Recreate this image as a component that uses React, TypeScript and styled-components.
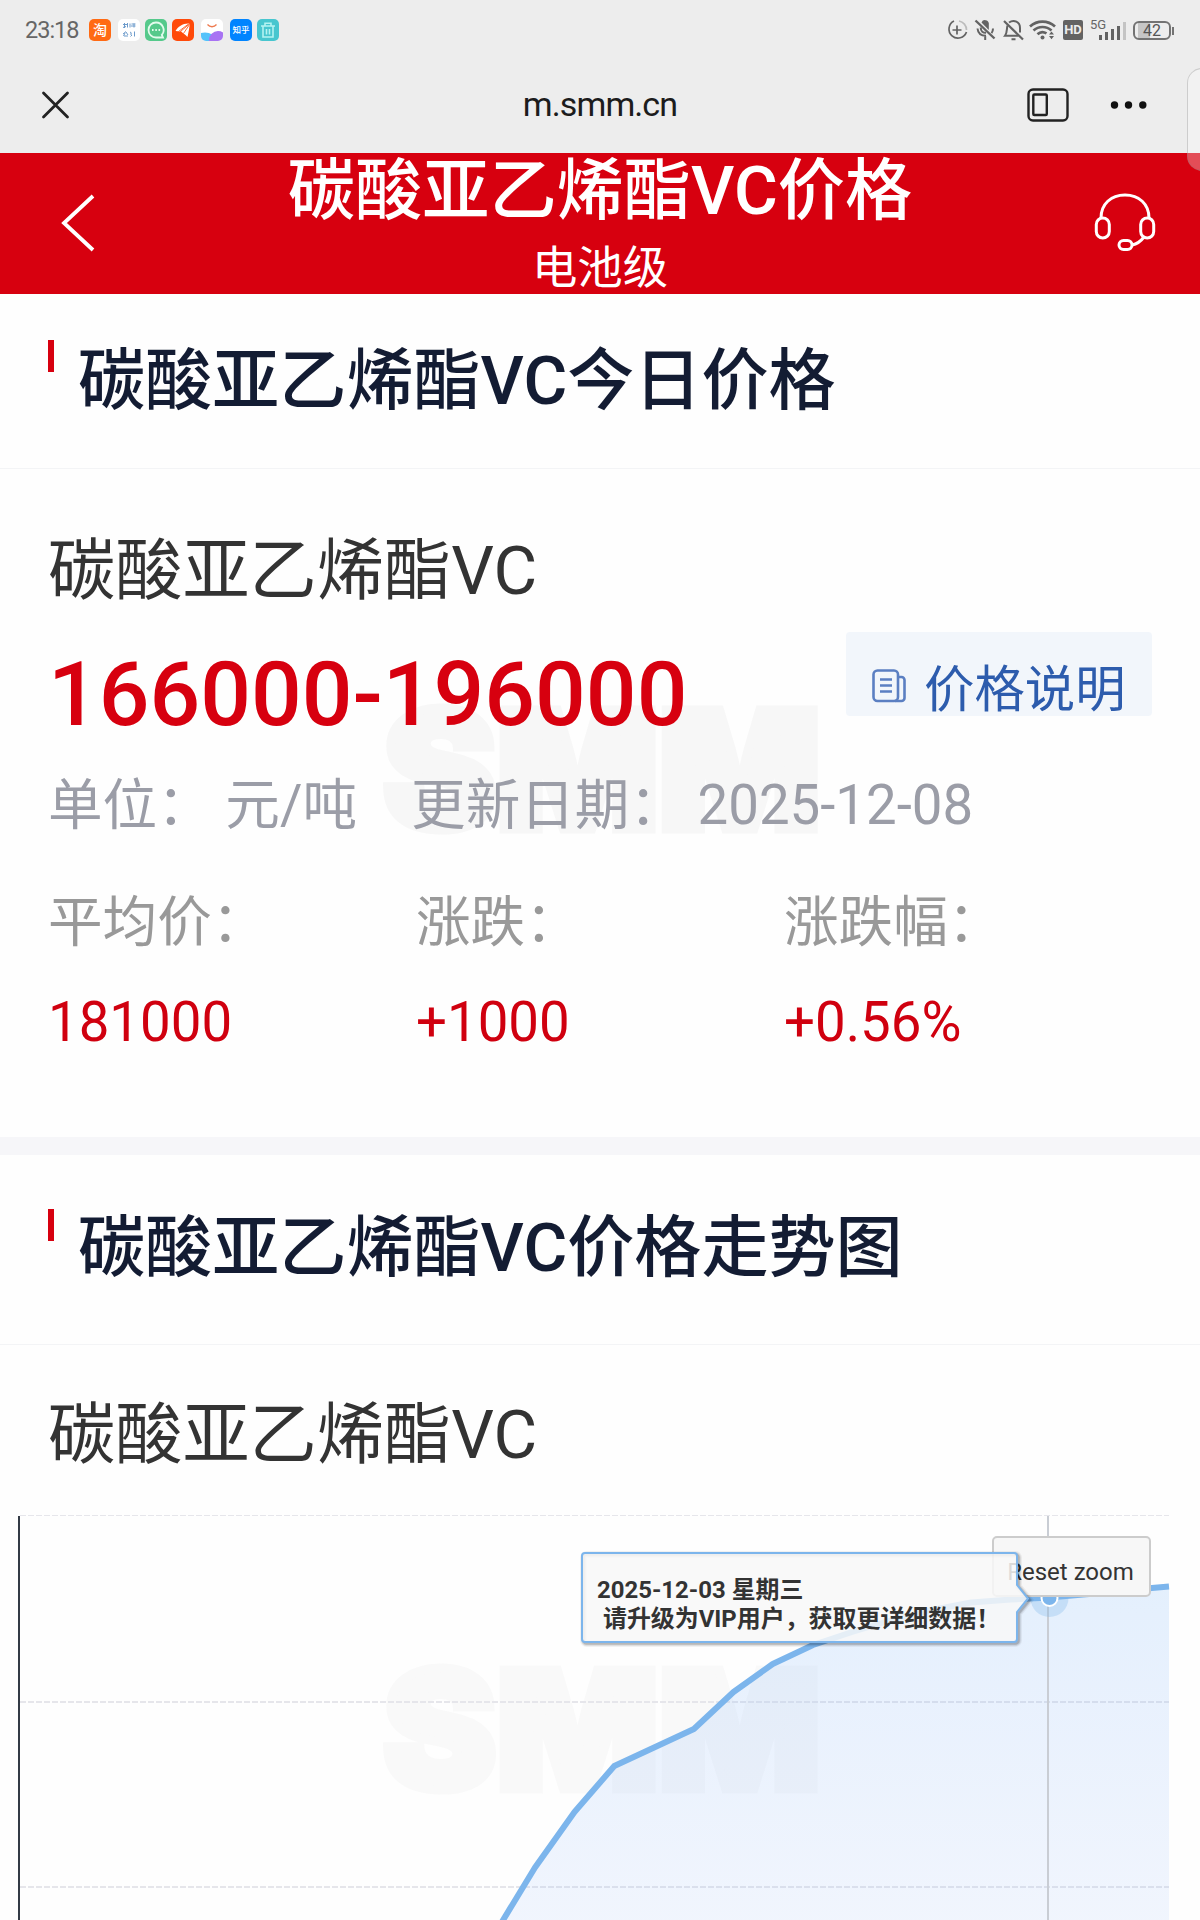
import React from 'react';
import styled, { createGlobalStyle } from 'styled-components';

const RED = '#d7000f';
const FONT = 'Roboto, "Noto Sans CJK SC", sans-serif';

const GlobalStyle = createGlobalStyle`
  * { box-sizing: border-box; }
  body { margin: 0; background: #fefefe; font-family: ${FONT}; }
`;

const Screen = styled.div`
  position: relative;
  width: 1200px;
  height: 1920px;
  overflow: hidden;
  display: flex;
  flex-direction: column;
  background: #fefefe;
`;

/* ---------- system status bar ---------- */

const StatusBar = styled.div`
  height: 57px;
  flex: none;
  display: flex;
  align-items: flex-start;
  justify-content: space-between;
  padding: 18px 29px 0 25px;
  background: #ededed;
  color: #666;
`;

const StatusGroup = styled.div`
  display: flex;
  align-items: center;
  height: 24px;
`;

const Clock = styled.span`
  width: 64px;
  font-size: 23.5px;
  line-height: 24px;
  letter-spacing: -1px;
  white-space: nowrap;
`;

const AppIcon = styled.span<{ $bg: string; $gap: number; $color?: string; $size?: number }>`
  width: 22px;
  height: 22px;
  margin-right: ${(p) => p.$gap}px;
  border-radius: 5px;
  background: ${(p) => p.$bg};
  color: ${(p) => p.$color ?? '#fff'};
  display: flex;
  align-items: center;
  justify-content: center;
  overflow: hidden;
  font-size: ${(p) => p.$size ?? 14}px;
  line-height: 16px;
  font-weight: 500;
  text-align: center;
  white-space: nowrap;
`;

const HdBadge = styled.span`
  width: 20px;
  height: 20px;
  margin-left: 6px;
  border-radius: 2px;
  background: #636363;
  color: #ededed;
  font-size: 13px;
  font-weight: 700;
  line-height: 20px;
  text-align: center;
`;

const Network = styled.span`
  display: flex;
  align-items: flex-end;
  margin-left: 7px;
  height: 20px;
`;

const NetworkLabel = styled.span`
  width: 9px;
  align-self: flex-start;
  font-size: 13px;
  line-height: 9px;
  white-space: nowrap;
`;

const Bar = styled.i<{ $h: number; $dim?: boolean }>`
  width: 3px;
  height: ${(p) => p.$h}px;
  margin-right: 3px;
  background: ${(p) => (p.$dim ? '#c4c4c4' : '#636363')};
`;

const Battery = styled.span`
  position: relative;
  width: 38px;
  height: 19px;
  margin-left: 4px;
  border: 2px solid #737373;
  border-radius: 6px;
  background: linear-gradient(90deg, #ededed 3px, #c6c6c6 3px, #c6c6c6 15px, #ededed 15px);
  font-size: 16px;
  line-height: 16px;
  text-align: center;
  color: #555;
  &::after {
    content: '';
    position: absolute;
    right: -5px;
    top: 4px;
    width: 2px;
    height: 8px;
    background: #737373;
  }
`;

/* ---------- browser bar ---------- */

const BrowserBar = styled.div`
  height: 96px;
  flex: none;
  display: grid;
  grid-template-columns: 1fr auto 1fr;
  align-items: center;
  padding: 0 40px;
  background: #ededed;
`;

const Address = styled.div`
  margin-top: -2px;
  font-size: 34px;
  line-height: 40px;
  letter-spacing: -0.9px;
  color: #1c1c1c;
`;

const Actions = styled.div`
  display: flex;
  align-items: center;
  justify-content: flex-end;
  gap: 41px;
  padding-right: 13px;
`;

const EdgeHandle = styled.div`
  position: absolute;
  left: 1187px;
  top: 68px;
  width: 30px;
  height: 103px;
  border: 1px solid rgba(120, 120, 120, 0.3);
  border-radius: 16px;
  background: rgba(255, 255, 255, 0.3);
`;

/* ---------- page header ---------- */

const PageHeader = styled.header`
  height: 141px;
  flex: none;
  display: grid;
  grid-template-columns: 160px 1fr 160px;
  background: ${RED};
  color: #fff;
`;

const HeaderSide = styled.div<{ $right?: boolean }>`
  display: flex;
  align-items: center;
  justify-content: ${(p) => (p.$right ? 'flex-end' : 'flex-start')};
  padding: ${(p) => (p.$right ? '0 44px 3px 0' : '0 0 1px 59px')};
`;

const HeaderTitles = styled.div`
  text-align: center;
  white-space: nowrap;
`;

const HeaderTitle = styled.h1`
  margin: 0;
  font-size: 67.2px;
  line-height: 77px;
  font-weight: 500;
`;

const HeaderSub = styled.div`
  margin-top: 13px;
  font-size: 45.4px;
  line-height: 51px;
`;

/* ---------- sections ---------- */

const SectionHead = styled.div<{ $top: number; $height: number; $line: number }>`
  height: ${(p) => p.$height}px;
  flex: none;
  display: flex;
  align-items: flex-start;
  padding: ${(p) => p.$top}px 0 0 48px;
  border-bottom: 1px solid #f3f4f6;
  line-height: ${(p) => p.$line}px;
  &::before {
    content: '';
    width: 6px;
    height: 32px;
    background: ${RED};
  }
`;

const SectionTitle = styled.h2`
  margin: 0 0 0 24px;
  font-size: 67.1px;
  line-height: inherit;
  font-weight: 500;
  color: #131c33;
  white-space: nowrap;
`;

const Divider = styled.div`
  height: 18px;
  flex: none;
  background: #f6f6f9;
`;

const ProductName = styled.div`
  font-size: 67.2px;
  line-height: 80px;
  color: #333;
`;

const PriceBody = styled.section`
  position: relative;
  height: 668px;
  flex: none;
  padding: 62px 48px 0 48px;
  white-space: nowrap;
`;

const PriceRow = styled.div`
  display: flex;
  justify-content: space-between;
  align-items: flex-start;
  height: 112px;
  margin-top: 21px;
`;

const Price = styled.div`
  margin-top: 12px;
  font-size: 89.3px;
  line-height: 101px;
  font-weight: 500;
  color: ${RED};
`;

const NoteButton = styled.button`
  display: flex;
  align-items: flex-start;
  width: 306px;
  height: 84px;
  padding: 27px 0 0 26px;
  border: 0;
  border-radius: 4px;
  background: #f2f6fb;
  color: #2d5cad;
  font-family: ${FONT};
  font-size: 50.4px;
  line-height: 61px;
  white-space: nowrap;
`;

const NoteIcon = styled.svg`
  flex: none;
  margin: 10px 18px 0 0;
`;

const MetaRow = styled.div`
  display: flex;
  gap: 54px;
  margin-top: 31px;
  font-size: 54.6px;
  line-height: 61px;
  color: #9b9da7;
`;

const Stats = styled.div`
  display: grid;
  grid-template-columns: 368px 368px 1fr;
  row-gap: 40px;
  margin-top: 56px;
  font-size: 54.6px;
  line-height: 60px;
`;

const StatLabel = styled.div`
  color: #999;
`;

const StatValue = styled.div`
  color: #d0000f;
`;

const Watermark = styled.svg<{ $top: number; $tone: string }>`
  position: absolute;
  left: 384px;
  top: ${(p) => p.$top}px;
  width: 432px;
  height: 129px;
  z-index: -1;
  overflow: visible;
  fill: ${(p) => p.$tone};
  stroke: ${(p) => p.$tone};
`;

const Layer = styled.div`
  position: relative;
  z-index: 0;
`;

/* ---------- chart ---------- */

const ChartName = styled(ProductName)`
  flex: none;
  padding: 50px 0 0 48px;
  height: 170px;
`;

const ChartArea = styled.section`
  position: relative;
  z-index: 0;
  flex: 1;
`;

const ChartSvg = styled.svg`
  display: block;
`;

const ResetButton = styled.button`
  position: absolute;
  left: 992px;
  top: 21px;
  width: 159px;
  height: 61px;
  padding: 11px 2px 0 0;
  border: 2px solid #cccccc;
  border-radius: 5px;
  background: #f7f7f7;
  color: #333;
  font-family: ${FONT};
  font-size: 24px;
  line-height: 28px;
  white-space: nowrap;
`;

const Tooltip = styled.div`
  position: absolute;
  z-index: 1;
  left: 581px;
  top: 36px;
  width: 449px;
  height: 94px;
  padding: 25px 0 0 16px;
  color: #333;
  font-size: 23.95px;
  line-height: 29px;
  font-weight: 700;
  white-space: pre;
`;

const TooltipShape = styled.svg`
  position: absolute;
  left: 0;
  top: 0;
  z-index: -1;
  overflow: visible;
`;

const points: [number, number][] = [
  [496, 1932], [504, 1918.5], [535, 1867.5], [574.5, 1812], [614.3, 1766], [693.9, 1729],
  [733.5, 1692], [772.7, 1664], [813, 1645], [852, 1632], [892, 1620], [932, 1610],
  [971, 1602.5], [1011, 1599.5], [1049, 1597.5], [1089, 1594], [1129, 1590], [1169, 1586.5],
];
const CHART_TOP = 1515;
const line = points.map(([x, y]) => `${x},${y - CHART_TOP}`).join(' ');
const bubble =
  'M4 2H433a3 3 0 0 1 3 3V34l11 13.500L436 61V88a3 3 0 0 1-3 3H4a3 3 0 0 1-3-3V5a3 3 0 0 1 3-3z';

const Logo = ({ top, tone }: { top: number; tone: string }) => (
  <Watermark $top={top} $tone={tone} viewBox="0 0 432 129" aria-hidden="true">
    <text
      x="-1"
      y="124"
      textLength="438"
      lengthAdjust="spacingAndGlyphs"
      fontFamily="Inter, Roboto, sans-serif"
      fontWeight="900"
      fontSize="164"
      strokeWidth="9"
    >
      SMM
    </text>
  </Watermark>
);

const stats = [
  { label: '平均价：', value: '181000' },
  { label: '涨跌：', value: '+1000' },
  { label: '涨跌幅：', value: '+0.56%' },
];

export default function App() {
  return (
    <Screen>
      <GlobalStyle />
      <StatusBar>
        <StatusGroup>
          <Clock>23:18</Clock>
          <AppIcon $bg="#ff6a13" $gap={7}>淘</AppIcon>
          <AppIcon $bg="#fff" $gap={5}>
            <svg width="22" height="22" viewBox="0 0 22 22" stroke="#6d9bcb" strokeWidth="1" fill="none">
              <path d="M5 5.500h4M6.500 4v5M5 8.500l3-1M9.500 4v4.500M12 4.500v4M13.500 5h4M13 7h4.500M16 4.500v4M5 15l3-2.500M7 14l-1.500 3M8 13l2 3M6 17h4M12 13l1.500 1M12 15h2M12.500 17.500l1.500-1.500M16.500 12.500v5" />
            </svg>
          </AppIcon>
          <AppIcon $bg="#55c98b" $gap={5}>
            <svg width="22" height="22" viewBox="0 0 22 22" fill="none" stroke="#e3fbed" strokeWidth="1.800">
              <path d="M11 3.500a7.500 7.500 0 1 0 0 15h7l-1.200-2.600A7.500 7.500 0 0 0 11 3.500z" />
              <path d="M7 11h1.600M10.300 11h1.600M13.500 11h1.600" strokeWidth="2" />
            </svg>
          </AppIcon>
          <AppIcon $bg="#ff4a0a" $gap={7}>
            <svg width="22" height="22" viewBox="0 0 22 22" fill="#fff">
              <path d="M3.500 12C6 7.500 11 4 17.500 4.500L8 12.500z" />
              <path d="M9 12.500L17.800 5l-.8 5.500L15.500 18l-2-2-2-1.500z" />
              <path d="M6.500 12.500l10-7.500M11.500 14.500l6-9" stroke="#ff4a0a" strokeWidth=".8" />
            </svg>
          </AppIcon>
          <AppIcon $bg="#fff" $gap={7}>
            <svg width="22" height="22" viewBox="0 0 22 22" fill="none">
              <ellipse cx="4" cy="20" rx="10" ry="6.500" fill="#54c2fa" />
              <ellipse cx="17" cy="21" rx="9" ry="9" fill="#a873f3" />
              <path d="M6.500 5.500C9 8.500 13 8.500 15.500 5.500" stroke="#ee7b50" strokeWidth="1.300" />
            </svg>
          </AppIcon>
          <AppIcon $bg="#0084ff" $gap={5} $size={8.5}>知乎</AppIcon>
          <AppIcon $bg="#48c6cf" $gap={0}>
            <svg width="22" height="22" viewBox="0 0 22 22" fill="none" stroke="#b5f3f2" strokeWidth="1.600">
              <path d="M4 7h14M8 6.500V4.200h6v2.300M6 7.500V18h10V7.500M9.500 10v5.500M12.500 10v5.500" />
            </svg>
          </AppIcon>
        </StatusGroup>
        <StatusGroup>
          <svg width="112" height="26" viewBox="0 0 112 26" fill="none" stroke="#636363" strokeWidth="2">
            <path d="M9 4A9 9 0 1 0 21.500 15" strokeWidth="1.700" />
            <path d="M14 4a9 9 0 0 1 7.500 9" stroke="#bcbcbc" strokeWidth="1.700" />
            <path d="M7.500 13h9M12 8.500v9" strokeWidth="1.700" />
            <path d="M30.500 3.500l19 18" strokeWidth="2.400" />
            <path d="M36.500 5.500a3.800 3.800 0 0 1 7.300 1v6.500z" fill="#636363" stroke="none" />
            <path d="M35.700 10.500c0 4 2.500 5.500 5.300 5.300M32.500 11.500c.5 5 4 7.300 8.500 7.300 M48 11.500c0 2-.5 3.400-1.500 4.600M40.200 19v4" />
            <path d="M59 4l19 18.500" strokeWidth="2.200" />
            <path d="M62.500 8.500c-1 3 0 7-2.500 10.300h13.500M64 5.500c5-3.500 11-.5 11 5.500v4.500M66.500 22.300h4" />
            <path d="M85 9.500c7-6.500 18-6.500 25 0M88.500 13.500c5-4.700 13-4.700 18 0M92.500 17.300c2.500-2.500 6-2.800 9-.9" strokeWidth="2.700" />
            <circle cx="97.500" cy="20.500" r="2" fill="#636363" stroke="none" />
            <path d="M104 17.500l2.500-3 2.500 3zM104 19l2.500 3.200 2.500-3.200z" fill="#636363" stroke="none" />
          </svg>
          <HdBadge>HD</HdBadge>
          <Network>
            <NetworkLabel>5G</NetworkLabel>
            <Bar $h={5} />
            <Bar $h={8} />
            <Bar $h={11} />
            <Bar $h={14} />
            <Bar $h={18} $dim />
          </Network>
          <Battery>42</Battery>
        </StatusGroup>
      </StatusBar>

      <BrowserBar>
        <svg width="32" height="32" viewBox="0 0 32 32" stroke="#222" strokeWidth="2.800" strokeLinecap="round">
          <path d="M3.500 4l24 24M27.500 4l-24 24" />
        </svg>
        <Address>m.smm.cn</Address>
        <Actions>
          <svg width="42" height="34" viewBox="0 0 42 34" fill="none" stroke="#222">
            <rect x="1.500" y="1.500" width="39" height="31" rx="4.500" strokeWidth="2.400" />
            <rect x="6.300" y="6.500" width="13.500" height="20.500" rx="1" strokeWidth="2.400" />
          </svg>
          <svg width="37" height="8" viewBox="0 0 37 8" fill="#111">
            <circle cx="4.500" cy="4" r="3.700" />
            <circle cx="18.500" cy="4" r="3.700" />
            <circle cx="32.800" cy="4" r="3.700" />
          </svg>
        </Actions>
      </BrowserBar>

      <PageHeader>
        <HeaderSide>
          <svg width="36" height="60" viewBox="0 0 36 60" fill="none" stroke="#fff" strokeWidth="3.800">
            <path d="M34 3L5 30l29 27" />
          </svg>
        </HeaderSide>
        <HeaderTitles>
          <HeaderTitle>碳酸亚乙烯酯VC价格</HeaderTitle>
          <HeaderSub>电池级</HeaderSub>
        </HeaderTitles>
        <HeaderSide $right>
          <svg width="62" height="60" viewBox="0 0 62 60" fill="none" stroke="#fff" strokeWidth="3">
            <path d="M7 26C7 12 17 3 31 3s24 9 24 23" />
            <rect x="2.300" y="26" width="13" height="20" rx="6.500" />
            <rect x="46.700" y="26" width="13" height="20" rx="6.500" />
            <rect x="25" y="48.500" width="13" height="9" rx="4.500" />
            <path d="M38 53c5-1 9-4 12-8" />
          </svg>
        </HeaderSide>
      </PageHeader>

      <SectionHead $top={46} $height={175} $line={83}>
        <SectionTitle>碳酸亚乙烯酯VC今日价格</SectionTitle>
      </SectionHead>
      <Layer>
        <PriceBody>
          <Logo top={236} tone="#f7f7f7" />
          <ProductName>碳酸亚乙烯酯VC</ProductName>
          <PriceRow>
            <Price>166000-196000</Price>
            <NoteButton>
              <NoteIcon width="34" height="34" viewBox="0 0 34 34" fill="none" stroke="#5b7fc2" strokeWidth="2.600">
                <path d="M26 8h3.500a3 3 0 0 1 3 3v18a3 3 0 0 1-3 3H23" />
                <rect x="1.500" y="1.500" width="24.500" height="30.500" rx="4" />
                <path d="M8 10.500h12M8 16.500h12M8 22.500h12" />
              </NoteIcon>
              价格说明
            </NoteButton>
          </PriceRow>
          <MetaRow>
            <span>单位： 元/吨</span>
            <span>更新日期： 2025-12-08</span>
          </MetaRow>
          <Stats>
            {stats.map((s) => (
              <StatLabel key={s.label}>{s.label}</StatLabel>
            ))}
            {stats.map((s) => (
              <StatValue key={s.value}>{s.value}</StatValue>
            ))}
          </Stats>
        </PriceBody>
      </Layer>

      <Divider />

      <SectionHead $top={54} $height={190} $line={79}>
        <SectionTitle>碳酸亚乙烯酯VC价格走势图</SectionTitle>
      </SectionHead>
      <ChartName>碳酸亚乙烯酯VC</ChartName>
      <ChartArea>
        <Logo top={150} tone="#f9f9f9" />
        <ChartSvg width="1200" height="405" viewBox="0 0 1200 405" fill="none">
          <defs>
            <linearGradient id="area" gradientUnits="userSpaceOnUse" x1="0" y1="70" x2="0" y2="405">
              <stop offset="0" stopColor="#74b2f8" stopOpacity="0.190" />
              <stop offset="0.400" stopColor="#7db0fa" stopOpacity="0.160" />
              <stop offset="1" stopColor="#84adf9" stopOpacity="0.110" />
            </linearGradient>
          </defs>
          <path d="M20 0H1169M20 187H1169M20 372H1169" stroke="#e6e6eb" strokeWidth="2" strokeDasharray="6 2" />
          <path d="M19 1V405" stroke="#333a45" strokeWidth="2" />
          <polygon points={`${line} 1169,420 496,420`} fill="url(#area)" />
          <path d="M1048 1V405" stroke="#c9cdd4" strokeWidth="2" />
          <circle cx="1049.500" cy="83" r="19" fill="#7cb5ec" fillOpacity="0.300" />
          <polyline points={line} stroke="#7cb5ec" strokeWidth="6" strokeLinejoin="round" />
          <circle cx="1049.500" cy="83" r="8" fill="#7cb5ec" stroke="#fff" strokeWidth="2" />
        </ChartSvg>
        <ResetButton>Reset zoom</ResetButton>
        <Tooltip>
          <TooltipShape width="449" height="94" viewBox="0 0 449 94" fill="none">
            <g stroke="#000" transform="translate(1.500 1.500)">
              <path d={bubble} strokeOpacity="0.050" strokeWidth="7" />
              <path d={bubble} strokeOpacity="0.100" strokeWidth="4.500" />
              <path d={bubble} strokeOpacity="0.150" strokeWidth="2.500" />
            </g>
            <path d={bubble} fill="#f8f8f8" fillOpacity="0.850" stroke="#7cb5ec" strokeWidth="2" />
          </TooltipShape>
          {'2025-12-03 星期三\n 请升级为VIP用户，获取更详细数据！'}
        </Tooltip>
      </ChartArea>
      <EdgeHandle />
    </Screen>
  );
}
